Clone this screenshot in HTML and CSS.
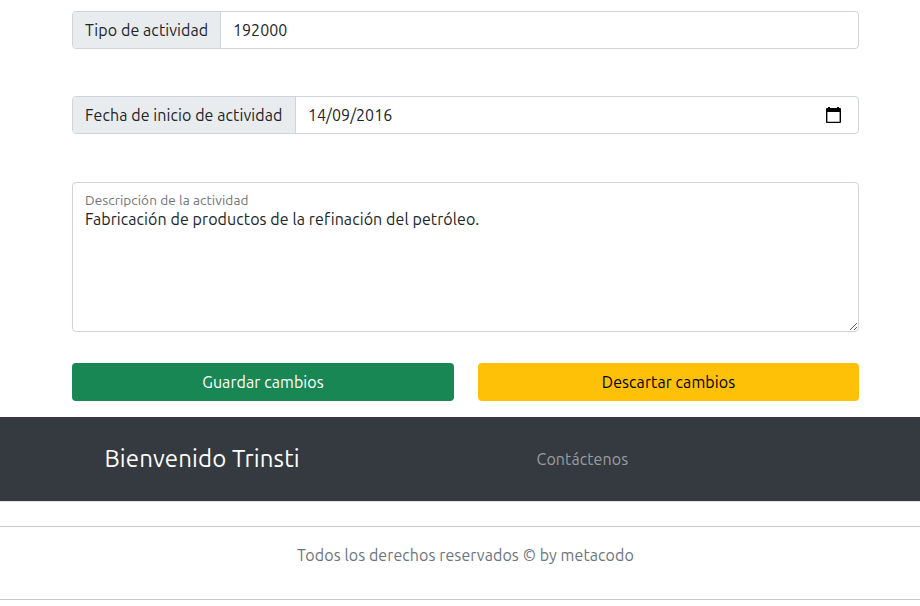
FILE: index.html
```
<!DOCTYPE html>
<html lang="es">
<head>
<meta charset="utf-8">
<title>Editar actividad</title>
<link rel="stylesheet" href="styles.css">
</head>
<body>
<div class="page">
  <main class="container">
    <div class="input-group">
      <label class="addon addon-type">Tipo de actividad</label>
      <div class="control">192000</div>
    </div>
    <div class="input-group">
      <label class="addon addon-date">Fecha de inicio de actividad</label>
      <div class="control"><span>14/09/2016</span>
        <svg class="calendar" width="15" height="17" viewBox="0 0 15 17"><path fill="#000" fill-rule="evenodd" d="M2 0h2v1h7V0h2v1h1q1 0 1 1v13q0 1-1 1H1q-1 0-1-1V2q0-1 1-1h1zM1.4 5v9.7h12.2V5z"/></svg>
      </div>
    </div>
    <div class="description">
      <label class="floating" for="desc">Descripción de la actividad</label>
      <textarea id="desc" spellcheck="false">Fabricación de productos de la refinación del petróleo.</textarea>
    </div>
    <div class="actions">
      <button class="btn save">Guardar cambios</button>
      <button class="btn discard">Descartar cambios</button>
    </div>
  </main>
  <footer>
    <div class="banner">
      <h4 class="welcome">Bienvenido Trinsti</h4>
      <a class="contact">Contáctenos</a>
    </div>
    <div class="copyright">Todos los derechos reservados © by metacodo</div>
  </footer>
</div>
</body>
</html>
```
FILE: styles.css
```
* { box-sizing: border-box; }
html { overflow: hidden; }
body {
  margin: 0;
  background: #fff;
  color: #212529;
  font: 400 16px/24px Ubuntu, "Noto Sans", sans-serif;
  letter-spacing: .085px;
  overflow: hidden;
}
.page { width: 931px; }
.container { width: 787px; margin: 0 auto; padding-top: 11px; }
.input-group {
  display: flex;
  height: 38px;
  margin-bottom: 47px;
  border: 1px solid #ced4da;
  border-radius: 4px;
  overflow: hidden;
}
.input-group + .input-group { margin-bottom: 48px; }
.addon {
  flex: none;
  padding: 6px 0 6px 12px;
  background: #e9ecef;
  border-right: 1px solid #ced4da;
  white-space: nowrap;
}
.addon-type { width: 148px; }
.addon-date { width: 223px; }
.control {
  flex: 1;
  display: flex;
  align-items: center;
  justify-content: space-between;
  padding: 0 17px 0 12px;
  letter-spacing: .03px;
}
.calendar { display: block; }
.description {
  height: 150px;
  border: 1px solid #ced4da;
  border-radius: 4px;
  display: flex;
  flex-direction: column;
  padding-top: 8px;
}
.floating { flex: none; height: 16px; padding-left: 12px; color: #717477; font-size: 13.6px; line-height: 19px; }
textarea {
  flex: 1;
  width: 100%;
  border: 0;
  outline: 0;
  padding: 0 12px;
  background: transparent;
  color: #212529;
  font: inherit;
  letter-spacing: inherit;
  resize: vertical;
  overflow: hidden;
}
.actions { display: grid; grid-template-columns: 382px 381px; gap: 24px; margin-top: 31px; }
.btn { height: 38px; padding: 0; border: 0; border-radius: 4px; font: inherit; letter-spacing: inherit; }
.save { background: #198754; color: #fff; }
.discard { background: #ffc107; color: #000; }
.banner {
  display: grid;
  grid-template-columns: 432px 1fr;
  align-items: center;
  height: 85px;
  margin-top: 16px;
  padding-left: 104.5px;
  background: #343a40;
  border-bottom: 1px solid #dee2e6;
}
.welcome { margin: 0 0 2px; color: #fff; font-size: 24px; font-weight: 400; line-height: 29px; letter-spacing: .13px; }
.contact { color: #9a9da0; }
.copyright {
  height: 74px;
  margin-top: 24px;
  padding-top: 16px;
  border: solid #c8c9ca;
  border-width: 1px 0;
  color: #6c757d;
  text-align: center;
}
```
